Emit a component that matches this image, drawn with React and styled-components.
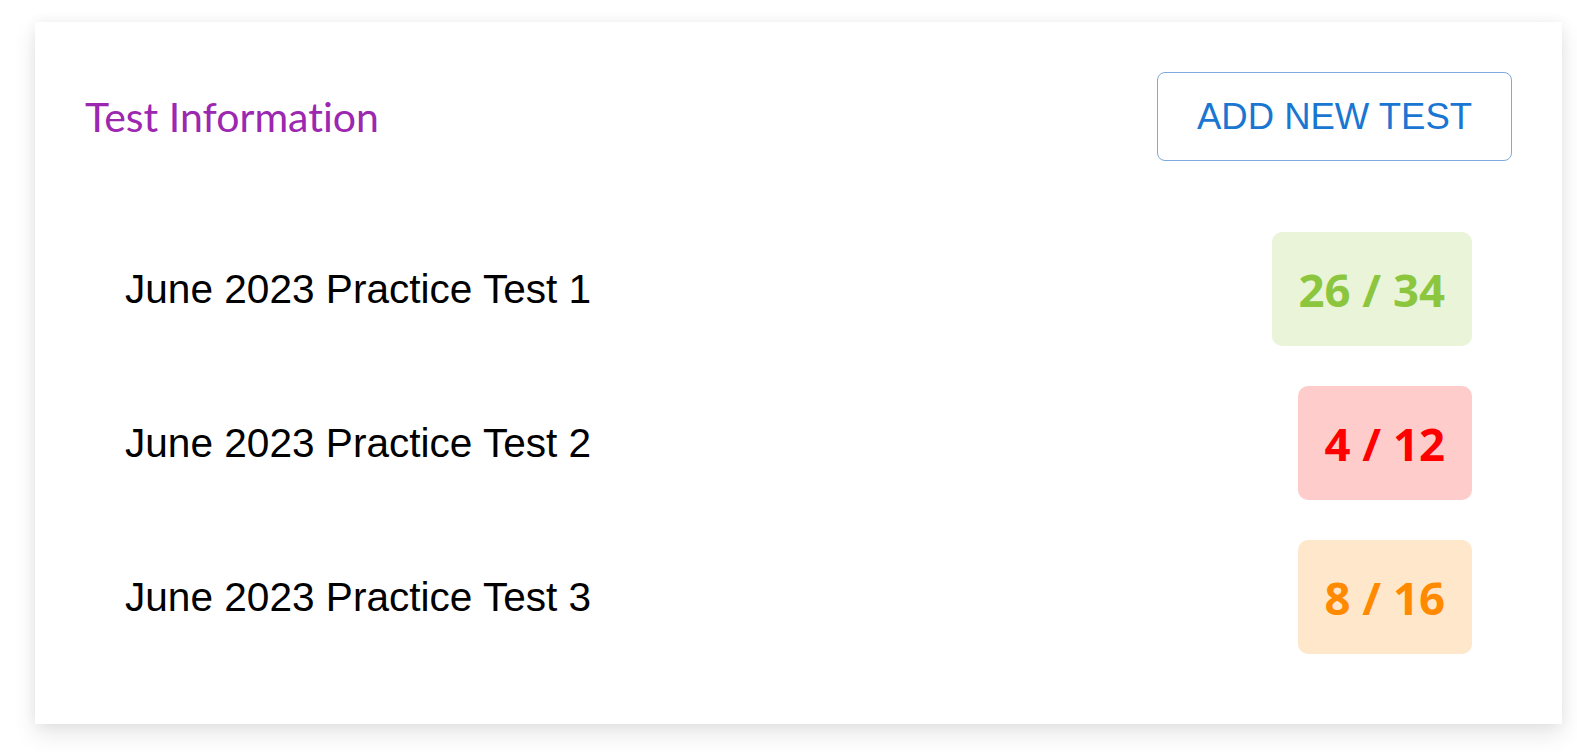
import React from "react";
import styled, { createGlobalStyle } from "styled-components";

const GlobalStyle = createGlobalStyle`
  html, body {
    margin: 0;
    padding: 0;
    background: #fff;
  }
`;

const Page = styled.div`
  padding: 22px 15px 29px 35px;
`;

const Card = styled.div`
  background: #fff;
  padding: 50px;
  box-shadow: 0 10px 22px rgba(0, 0, 0, 0.1), 0 0 12px rgba(0, 0, 0, 0.05);
`;

const Header = styled.div`
  display: flex;
  align-items: center;
  justify-content: space-between;
  margin-bottom: 51px;
`;

const Title = styled.h2`
  margin: 0;
  font-family: Lato, "Open Sans", sans-serif;
  font-weight: 400;
  font-size: 41px;
  font-variant-ligatures: none;
  color: #9c27b0;
`;

const AddButton = styled.button`
  width: 355px;
  height: 89px;
  background: #fff;
  border: 1px solid #7ea9dc;
  border-radius: 8px;
  color: #1976d2;
  font-family: "Liberation Sans", Arial, sans-serif;
  font-size: 36.5px;
  text-transform: uppercase;
  cursor: pointer;
`;

const List = styled.div`
  display: flex;
  flex-direction: column;
`;

const Row = styled.div`
  display: flex;
  align-items: center;
  justify-content: space-between;
  padding: 20px 40px;
`;

const Name = styled.span`
  font-family: "Liberation Sans", Arial, sans-serif;
  font-size: 40.6px;
  color: #000;
`;

const tones = {
  good: { fg: "#8cc63e", bg: "#eaf4d9" },
  bad: { fg: "#ff0000", bg: "#ffcccc" },
  mid: { fg: "#ff8a00", bg: "#ffe7cc" },
};

const Score = styled.div`
  display: flex;
  align-items: center;
  justify-content: center;
  height: 114px;
  padding: 0 27px;
  border-radius: 10px;
  background: ${(p) => tones[p.$tone].bg};
  color: ${(p) => tones[p.$tone].fg};
  font-family: "Open Sans", sans-serif;
  font-weight: 700;
  font-size: 45.5px;
`;

const tests = [
  { name: "June 2023 Practice Test 1", score: "26 / 34", tone: "good" },
  { name: "June 2023 Practice Test 2", score: "4 / 12", tone: "bad" },
  { name: "June 2023 Practice Test 3", score: "8 / 16", tone: "mid" },
];

export default function App() {
  return (
    <>
      <GlobalStyle />
      <Page>
        <Card>
          <Header>
            <Title>Test Information</Title>
            <AddButton>Add New Test</AddButton>
          </Header>
          <List>
            {tests.map((t) => (
              <Row key={t.name}>
                <Name>{t.name}</Name>
                <Score $tone={t.tone}>{t.score}</Score>
              </Row>
            ))}
          </List>
        </Card>
      </Page>
    </>
  );
}
